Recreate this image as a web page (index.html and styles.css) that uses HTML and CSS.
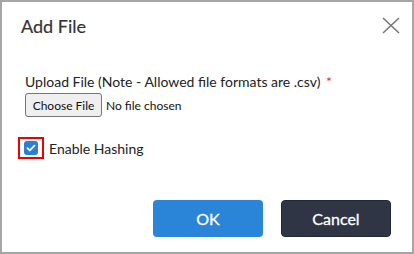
FILE: index.html
```html
<!DOCTYPE html>
<html>
<head>
<meta charset="utf-8">
<link rel="stylesheet" href="styles.css">
</head>
<body>
<div class="dialog">
  <div class="header">
    <h1 class="title">Add File</h1>
    <button class="close" aria-label="Close">
      <svg width="18" height="18" viewBox="0 0 18 18"><path d="M1 1 L17 16 M17 1 L1 16" stroke="#777" stroke-width="1.6" fill="none"/></svg>
    </button>
  </div>
  <div class="body">
    <label class="label">Upload File (Note - Allowed file formats are .csv) <span class="req">*</span></label>
    <div class="file-row">
      <span class="file-btn">Choose File</span>
      <span class="file-text">No file chosen</span>
    </div>
    <div class="check-row">
      <span class="check-outline">
        <span class="check">
          <svg width="10" height="8" viewBox="0 0 10 8"><path d="M1.5 4.2 L3.8 6.3 L8.5 1.6" stroke="#fff" stroke-width="1.8" fill="none" stroke-linecap="round" stroke-linejoin="round"/></svg>
        </span>
      </span>
      <span class="check-label">Enable Hashing</span>
    </div>
  </div>
  <div class="footer">
    <button class="btn btn-ok">OK</button>
    <button class="btn btn-cancel">Cancel</button>
  </div>
</div>
</body>
</html>
```
FILE: styles.css
```css
* { box-sizing: border-box; }
html, body { margin: 0; padding: 0; background: #fff; }
body { font-family: Lato, "Open Sans", sans-serif; color: #333; }
.dialog {
  width: 414px;
  height: 254px;
  border: 2px solid #a6a6a6;
  background: #fff;
  display: flex;
  flex-direction: column;
}
.header {
  display: flex;
  align-items: flex-start;
  justify-content: space-between;
  padding: 12px 12px 0 19px;
}
.title {
  margin: 0;
  font-size: 18px;
  font-weight: 400;
  color: #333;
  line-height: 24px;
  -webkit-text-stroke: 0.2px #333;
}
.close {
  border: 0;
  background: none;
  padding: 0;
  margin-top: 3px;
  width: 18px;
  height: 18px;
  display: flex;
}
.body {
  padding: 35px 0 0 23px;
}
.label {
  display: block;
  font-size: 14px;
  line-height: 17px;
  color: #222;
}
.req { color: #e0284a; margin-left: 2px; }
.file-row {
  display: flex;
  align-items: center;
  margin-top: 3px;
}
.file-btn {
  display: inline-flex;
  align-items: center;
  justify-content: center;
  width: 77px;
  height: 24px;
  border: 1px solid #767676;
  border-radius: 3px;
  background: #efefef;
  font-size: 12px;
  color: #111;
}
.file-text {
  font-size: 12px;
  color: #111;
  margin-left: 4px;
}
.check-row {
  display: flex;
  align-items: center;
  margin-top: 20px;
  margin-left: -7px;
}
.check-outline {
  width: 26px;
  height: 22px;
  border: 2px solid #ee0000;
  display: flex;
  align-items: center;
  justify-content: center;
}
.check {
  width: 14px;
  height: 14px;
  border-radius: 3px;
  background: #2b7fd4;
  display: flex;
  align-items: center;
  justify-content: center;
}
.check-label {
  font-size: 14px;
  color: #222;
  margin-left: 5px;
}
.footer {
  margin-top: auto;
  display: flex;
  justify-content: flex-end;
  gap: 18px;
  padding: 0 21px 15px 0;
}
.btn {
  width: 110px;
  height: 37px;
  border: 0;
  border-radius: 4px;
  font-family: inherit;
  font-size: 16px;
  font-weight: 400;
  color: #fff;
  -webkit-text-stroke: 0.3px #fff;
}
.btn-ok { background: #2a85d8; }
.btn-cancel { background: #2f3544; border: 1px solid #222733; }
```
